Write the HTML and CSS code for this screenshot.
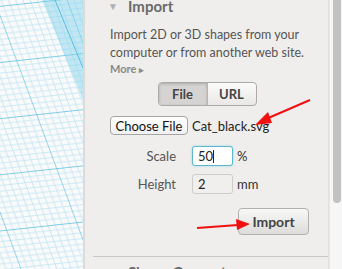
FILE: index.html
```html
<!DOCTYPE html>
<html>

<head>
    <title>Import</title>
    <meta name="viewport" content="width=device-width, minimum-scale=1.0" />
    <link rel="stylesheet" href="styles.css">
</head>

<body>
    <div class="app">
        <div class="canvas">
            <svg width="83" height="269" viewBox="0 0 83 269">
                <defs>
                    <pattern id="grid" width="70" height="54" patternUnits="userSpaceOnUse"
                        patternTransform="matrix(1 -0.108 0.37 1 16.1 60.3)">
                        <path d="M7 0V54M14 0V54M21 0V54M28 0V54M35 0V54M42 0V54M49 0V54M56 0V54M63 0V54
                                 M0 5.4H70M0 10.8H70M0 16.2H70M0 21.6H70M0 27H70M0 32.4H70M0 37.8H70M0 43.2H70M0 48.6H70"
                            stroke="#c6e6f3" stroke-width="0.9" fill="none" />
                        <path d="M0 0V54M0 0H70" stroke="#55bde0" stroke-width="1.2" fill="none" />
                    </pattern>
                </defs>
                <rect width="83" height="269" fill="#fafafa" />
                <rect width="83" height="269" fill="url(#grid)" />
                <polygon points="42,0 83,0 83,100" fill="#7fd0ea" opacity="0.45" />
                <line x1="55" y1="0" x2="83" y2="68" stroke="#55bde0" stroke-width="1" />
            </svg>
        </div>
        <div class="panel">
            <div class="section">
                <h2 class="section-title"><span class="tri">&#9660;</span>Import</h2>
                <p class="desc">Import 2D or 3D shapes from your computer or from another web site.</p>
                <a class="more">More <span class="more-arrow">&#9656;</span></a>
                <div class="seg-wrap">
                    <div class="seg">
                        <span class="seg-item active">File</span>
                        <span class="seg-item">URL</span>
                    </div>
                </div>
                <div class="file-row">
                    <button class="btn-file">Choose File</button>
                    <span class="file-name">Cat_black.svg</span>
                </div>
                <div class="field">
                    <label>Scale</label>
                    <span class="input focus">50<span class="caret"></span></span>
                    <span class="unit">%</span>
                </div>
                <div class="field">
                    <label>Height</label>
                    <span class="input">2</span>
                    <span class="unit">mm</span>
                </div>
                <div class="actions">
                    <button class="btn-import">Import</button>
                </div>
            </div>
            <div class="section-next">
                <h2 class="section-title"><span class="tri">&#9654;</span>Shape Generators</h2>
            </div>
            <svg class="arrows" width="243" height="269" viewBox="85 0 243 269">
                <g stroke="#f01010" stroke-width="2" fill="#f01010">
                    <line x1="310" y1="100" x2="266" y2="119" />
                    <polygon points="255,125 268,112 272,123" stroke="none" />
                    <line x1="197" y1="228" x2="238" y2="225" />
                    <polygon points="250,224 236,219 237,230" stroke="none" />
                </g>
            </svg>
        </div>
        <div class="scrollbar">
            <div class="thumb"></div>
        </div>
    </div>
</body>

</html>
```

FILE: styles.css
```css
html,
body {
    margin: 0;
    padding: 0;
    overflow: hidden;
}

body {
    font-family: Lato, "Open Sans", sans-serif;
    color: #555;
    background: #efeeec;
}

.app {
    display: flex;
    flex-flow: row nowrap;
    width: 342px;
    height: 269px;
}

.canvas {
    width: 83px;
    flex: none;
}

.canvas svg {
    display: block;
}

.panel {
    position: relative;
    width: 243px;
    flex: none;
    border-left: 2px solid #dcdbd9;
    border-right: 1px solid #e2e1df;
    background: #efeeec;
    overflow: hidden;
}

.section {
    margin: -3px 0 0 8px;
    padding: 0 18px 0 17px;
    border-bottom: 1px solid #c9c8c6;
    height: 260px;
    box-sizing: border-box;
}

.section-title {
    margin: 0 0 0 -2px;
    font-size: 15px;
    line-height: 18px;
    font-weight: bold;
    color: #6a6a6a;
    white-space: nowrap;
}

.tri {
    display: inline-block;
    width: 20px;
    font-size: 10px;
    color: #b0b0b0;
    vertical-align: 2px;
}

.desc {
    margin: 11px 0 0;
    font-size: 12.5px;
    line-height: 18px;
    color: #555;
}

.more {
    display: block;
    margin-top: 0;
    font-size: 11px;
    font-weight: bold;
    line-height: 14px;
    color: #8a8a8a;
}

.more-arrow {
    font-size: 9px;
}

.seg-wrap {
    display: flex;
    justify-content: center;
    margin-top: 5px;
    padding-right: 6px;
}

.seg {
    display: flex;
    border: 1px solid #aaa;
    border-radius: 4px;
    overflow: hidden;
    background: linear-gradient(#fbfbfa, #e9e8e6);
}

.seg-item {
    width: 48px;
    height: 22px;
    line-height: 22px;
    text-align: center;
    font-size: 13px;
    font-weight: bold;
    color: #444;
}

.seg-item.active {
    background: #d5d4d2;
    box-shadow: inset 0 1px 3px rgba(0, 0, 0, 0.2);
    border-right: 1px solid #b5b4b2;
}

.file-row {
    display: flex;
    align-items: center;
    margin-top: 10px;
}

.btn-file {
    width: 78px;
    height: 19px;
    padding: 0;
    font-family: Lato, "Open Sans", sans-serif;
    font-size: 13px;
    color: #111;
    background: linear-gradient(#ffffff, #f0f0f0);
    border: 1px solid #a5a5a5;
    border-radius: 4px;
}

.file-name {
    margin-left: 4px;
    font-size: 13px;
    color: #222;
}

.field {
    display: flex;
    align-items: center;
    margin-top: 11px;
}

.field + .field {
    margin-top: 8px;
}

.field label {
    width: 66px;
    text-align: right;
    font-size: 13px;
    color: #555;
}

.input {
    display: flex;
    align-items: center;
    margin-left: 16px;
    width: 41px;
    height: 20px;
    box-sizing: border-box;
    padding-left: 5px;
    font-size: 13px;
    color: #222;
    background: #f1efed;
    border: 1px solid #cfcdca;
    border-radius: 3px;
}

.input.focus {
    background: #fff;
    border: 1px solid #5fb7cc;
    box-shadow: 0 0 2px #7fd0e3;
}

.caret {
    display: inline-block;
    width: 1px;
    height: 13px;
    background: #222;
}

.unit {
    margin-left: 4px;
    font-size: 13px;
    color: #333;
}

.actions {
    display: flex;
    justify-content: flex-end;
    margin-top: 14px;
    padding-right: 1px;
}

.btn-import {
    width: 71px;
    height: 27px;
    padding: 0;
    font-family: Lato, "Open Sans", sans-serif;
    font-size: 14px;
    font-weight: bold;
    color: #444;
    background: linear-gradient(#f8f8f7, #dddcda);
    border: 1px solid #b2b1af;
    border-radius: 4px;
}

.section-next {
    margin: 6px 0 0 25px;
}

.arrows {
    position: absolute;
    left: 0;
    top: 0;
}

.scrollbar {
    flex: none;
    width: 13px;
    background: #f6f6f6;
    border-left: 1px solid #e6e6e6;
    padding: 0 2px 0 3px;
    box-sizing: border-box;
}

.thumb {
    width: 8px;
    height: 207px;
    margin-top: -4px;
    background: #c2c2c2;
    border-radius: 4px;
}
```
